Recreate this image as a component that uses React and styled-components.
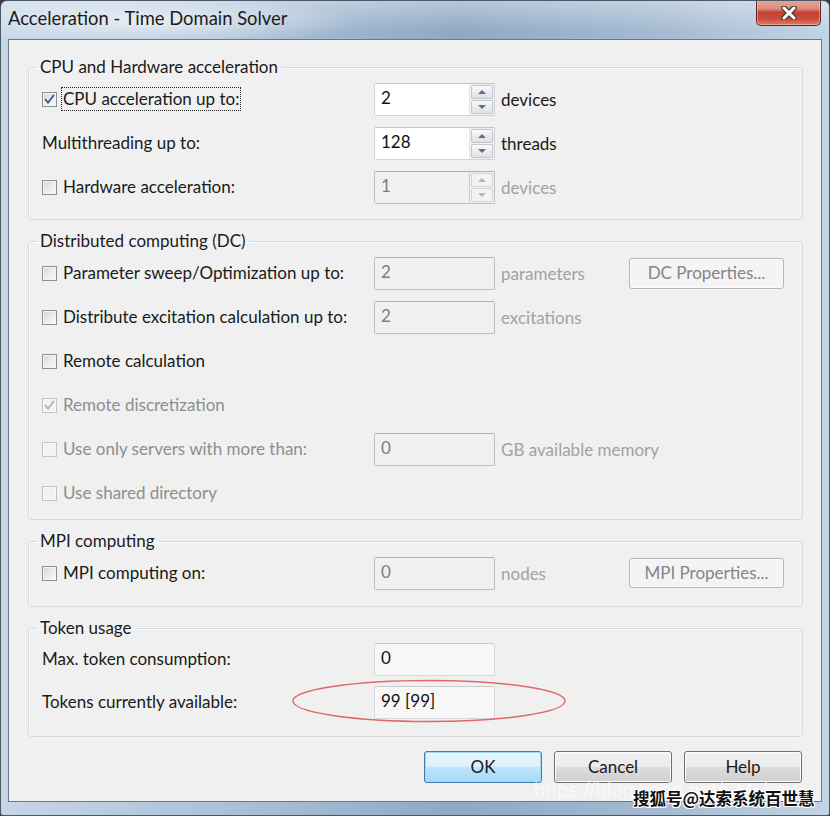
import React from "react";
import styled, { createGlobalStyle } from "styled-components";

const GlobalStyle = createGlobalStyle`
  html, body {
    margin: 0;
    padding: 0;
    background: #3a3f46;
  }
  body {
    font-family: Lato, "Liberation Sans", sans-serif;
  }
`;

const Window = styled.div`
  position: relative;
  width: 830px;
  height: 816px;
  box-sizing: border-box;
  display: flex;
  flex-direction: column;
  border-radius: 7px 7px 3px 3px;
  border: 1px solid #4b5866;
  overflow: hidden;
  background:
    linear-gradient(180deg, rgba(255, 255, 255, 0.35) 0px, rgba(255, 255, 255, 0) 30px),
    linear-gradient(90deg, #c6d6e7 0%, #a9bfd6 30%, #8fa9c4 55%, #a5bbd3 80%, #c2d4e6 100%);
`;

const TitleBar = styled.div`
  height: 38px;
  display: flex;
  align-items: flex-start;
  background: radial-gradient(ellipse 210px 26px at 145px 20px, rgba(236, 242, 248, 0.9), rgba(236, 242, 248, 0));
`;

const Title = styled.div`
  padding: 6px 0 0 7px;
  font-size: 18.4px;
  color: #1c1c1c;
`;

const CloseButton = styled.div`
  margin-left: auto;
  margin-right: 8px;
  margin-top: -1px;
  width: 65px;
  height: 26px;
  box-sizing: border-box;
  border: 1px solid #5e2620;
  border-top: none;
  border-radius: 0 0 5px 5px;
  background: linear-gradient(180deg, #e8a89d 0%, #d98a7d 35%, #c4402f 50%, #c84d3d 75%, #db7d63 100%);
  box-shadow: inset 0 0 0 1px rgba(255, 220, 210, 0.45);
  display: flex;
  align-items: center;
  justify-content: center;
`;

const Client = styled.div`
  flex: 1;
  margin: 0 7px 0 7px;
  border: 1px solid #6a7988;
  background: #f0f0f0;
  padding: 17px 18px 17px 19px;
  display: flex;
  flex-direction: column;
  gap: 11px;
  color: #1a1a1a;
  font-size: 17px;
`;

const BottomFrame = styled.div`
  height: 13px;
`;

const Group = styled.fieldset`
  margin: 0;
  padding: 0 18px ${(p) => p.$pb}px 13px;
  border: 1px solid #d3dbe2;
  border-radius: 3px;
  box-shadow: inset 1px 1px 0 #fbfbfb;
`;

const Legend = styled.legend`
  margin-left: -5px;
  padding: 0 3px;
  font-size: 17px;
  line-height: 20px;
  color: #1a1a1a;
`;

const Row = styled.div`
  position: relative;
  display: flex;
  align-items: center;
  height: ${(p) => p.$h || 44}px;
`;

const LabelCell = styled.div`
  width: 332px;
  display: flex;
  align-items: center;
  gap: 4px;
  color: ${(p) => (p.$disabled ? "#8e8e8e" : "#1a1a1a")};
`;

const LabelText = styled.span`
  padding: ${(p) => (p.$plain ? "0" : "1px")};
  border: ${(p) => (p.$plain ? "none" : "1px dotted")};
  border-color: ${(p) => (p.$focus ? "#222" : "transparent")};
  line-height: 20px;
`;

const Box = styled.span`
  width: 15px;
  height: 15px;
  box-sizing: border-box;
  flex: none;
  border: 1px solid ${(p) => (p.$disabled ? "#c4c4c4" : "#8e8f8f")};
  background: ${(p) =>
    p.$disabled
      ? "#f2f2f2"
      : "linear-gradient(135deg, #d6d6d6 0%, #ececec 55%, #fbfbfb 100%)"};
  box-shadow: inset 0 0 0 1px ${(p) => (p.$disabled ? "#f7f7f7" : "#f4f4f4")};
  display: flex;
  align-items: center;
  justify-content: center;
`;

const Field = styled.div`
  width: 121px;
  height: 33px;
  box-sizing: border-box;
  border: 1px solid ${(p) => (p.$disabled ? "#bcc0c4" : "#d7d9dc")};
  border-top-color: ${(p) => (p.$disabled ? "#adb1b5" : "#c8cacd")};
  border-radius: 2px;
  background: ${(p) => (p.$disabled ? "#f0f0f0" : p.$readonly ? "#f7f7f7" : "#fff")};
  padding: 0 0 3px 6px;
  display: flex;
  align-items: center;
  color: ${(p) => (p.$disabled ? "#7d7d7d" : "#111")};
`;

const SpinField = styled.div`
  width: 121px;
  height: 33px;
  box-sizing: border-box;
  display: flex;
  border: 1px solid ${(p) => (p.$disabled ? "#bcc0c4" : "#d0d3d7")};
  border-top-color: ${(p) => (p.$disabled ? "#adb1b5" : "#bfc2c6")};
  border-radius: 2px;
  background: #f0f0f0;
`;

const SpinText = styled.div`
  flex: 1;
  background: ${(p) => (p.$disabled ? "#f0f0f0" : "#fff")};
  border-right: 1px solid ${(p) => (p.$disabled ? "#d0d0d0" : "#e2e4e7")};
  padding: 0 0 3px 6px;
  display: flex;
  align-items: center;
  color: ${(p) => (p.$disabled ? "#7d7d7d" : "#111")};
`;

const SpinCol = styled.div`
  width: 22px;
  padding: 1px;
  display: flex;
  flex-direction: column;
  gap: 1px;
`;

const SpinButton = styled.div`
  flex: 1;
  border: 1px solid ${(p) => (p.$disabled ? "#d4d4d4" : "#c3c7cc")};
  border-radius: 2px;
  background: ${(p) =>
    p.$disabled ? "#f3f3f3" : "linear-gradient(180deg, #fafafa 0%, #ececec 50%, #e0e0e0 100%)"};
  display: flex;
  align-items: center;
  justify-content: center;

  &::after {
    content: "";
    width: 0;
    height: 0;
    border-left: 4px solid transparent;
    border-right: 4px solid transparent;
    ${(p) => (p.$down ? "border-top" : "border-bottom")}: 4px solid
      ${(p) => (p.$disabled ? "#b6b6b6" : "#5a6f96")};
  }
`;

const Unit = styled.span`
  margin-left: 6px;
  width: ${(p) => (p.$wide ? "auto" : "128px")};
  color: ${(p) => (p.$disabled ? "#a2a2a2" : "#1a1a1a")};
`;

const Button = styled.button`
  width: ${(p) => p.$w || 118}px;
  height: ${(p) => p.$h || 32}px;
  box-sizing: border-box;
  font-family: inherit;
  font-size: 17px;
  border-radius: 3px;
  padding: 0 0 2px;
  cursor: default;
  color: ${(p) => (p.$disabled ? "#858585" : "#1a1a1a")};
  border: 1px solid ${(p) => (p.$disabled ? "#b2b6ba" : p.$default ? "#3c7fb1" : "#707070")};
  background: ${(p) =>
    p.$disabled
      ? "#f4f4f4"
      : p.$default
      ? "linear-gradient(180deg, #eaf6fd 0%, #d9f0fc 50%, #bee6fd 50%, #a7d9f5 100%)"
      : "linear-gradient(180deg, #f2f2f2 0%, #ebebeb 50%, #dddddd 50%, #cfcfcf 100%)"};
  box-shadow: inset 0 0 0 1px ${(p) => (p.$disabled ? "#fbfbfb" : p.$default ? "#9fd9fa" : "#fcfcfc")};
`;

const Footer = styled.div`
  margin-top: 3px;
  display: flex;
  justify-content: flex-end;
  gap: 12px;
  padding-right: 1px;
`;

const Ellipse = styled.svg`
  position: absolute;
  left: 249px;
  top: -1px;
  overflow: visible;
`;

const WatermarkUrl = styled.div`
  position: absolute;
  left: 533px;
  top: 778px;
  font-family: "Liberation Sans", sans-serif;
  font-size: 20px;
  color: rgba(255, 255, 255, 0.6);
  letter-spacing: 0.2px;
  white-space: nowrap;
`;

const WatermarkSohu = styled.div`
  position: absolute;
  left: 632px;
  top: 785px;
  font-family: "Noto Sans CJK SC", sans-serif;
  font-size: 16.5px;
  font-weight: 700;
  color: #111;
  white-space: nowrap;
  text-shadow: 1px 0 #fff, -1px 0 #fff, 0 1px #fff, 0 -1px #fff, 1px 1px #fff, -1px -1px #fff, 1px -1px #fff,
    -1px 1px #fff;
`;

const Check = ({ disabled }) => (
  <svg width="11" height="11" viewBox="0 0 11 11">
    <path
      d="M1.5 5.5 L4 8.8 L9.5 1.5"
      fill="none"
      stroke={disabled ? "#b0b0b0" : "#3c54a4"}
      strokeWidth="1.8"
      strokeLinecap="round"
      strokeLinejoin="round"
    />
  </svg>
);

const CheckBox = ({ checked, disabled }) => (
  <Box $disabled={disabled}>{checked && <Check disabled={disabled} />}</Box>
);

const Spin = ({ value, disabled }) => (
  <SpinField $disabled={disabled}>
    <SpinText $disabled={disabled}>{value}</SpinText>
    <SpinCol>
      <SpinButton $disabled={disabled} />
      <SpinButton $disabled={disabled} $down />
    </SpinCol>
  </SpinField>
);

const Option = ({ label, checked, disabled, focus }) => (
  <LabelCell $disabled={disabled}>
    <CheckBox checked={checked} disabled={disabled} />
    <LabelText $focus={focus}>{label}</LabelText>
  </LabelCell>
);

const Plain = ({ label }) => (
  <LabelCell>
    <LabelText $plain>{label}</LabelText>
  </LabelCell>
);

export default function App() {
  return (
    <>
      <GlobalStyle />
      <Window>
        <TitleBar>
          <Title>Acceleration - Time Domain Solver</Title>
          <CloseButton>
            <svg width="18" height="14" viewBox="0 0 18 14">
              <path d="M4 2 L14 12 M14 2 L4 12" stroke="#4a3a38" strokeWidth="5.5" strokeLinecap="round" />
              <path d="M4 2 L14 12 M14 2 L4 12" stroke="#ffffff" strokeWidth="3" strokeLinecap="round" />
            </svg>
          </CloseButton>
        </TitleBar>

        <Client>
          <Group $pb={10}>
            <Legend>CPU and Hardware acceleration</Legend>
            <Row>
              <Option label="CPU acceleration up to:" checked focus />
              <Spin value="2" />
              <Unit>devices</Unit>
            </Row>
            <Row>
              <Plain label="Multithreading up to:" />
              <Spin value="128" />
              <Unit>threads</Unit>
            </Row>
            <Row>
              <Option label="Hardware acceleration:" />
              <Spin value="1" disabled />
              <Unit $disabled>devices</Unit>
            </Row>
          </Group>

          <Group $pb={4}>
            <Legend>Distributed computing (DC)</Legend>
            <Row>
              <Option label="Parameter sweep/Optimization up to:" />
              <Field $disabled>2</Field>
              <Unit $disabled>parameters</Unit>
              <Button $w={155} $h={31} $disabled>
                DC Properties...
              </Button>
            </Row>
            <Row>
              <Option label="Distribute excitation calculation up to:" />
              <Field $disabled>2</Field>
              <Unit $disabled>excitations</Unit>
            </Row>
            <Row>
              <Option label="Remote calculation" />
            </Row>
            <Row>
              <Option label="Remote discretization" checked disabled />
            </Row>
            <Row>
              <Option label="Use only servers with more than:" disabled />
              <Field $disabled>0</Field>
              <Unit $disabled $wide>
                GB available memory
              </Unit>
            </Row>
            <Row>
              <Option label="Use shared directory" disabled />
            </Row>
          </Group>

          <Group $pb={11}>
            <Legend>MPI computing</Legend>
            <Row>
              <Option label="MPI computing on:" />
              <Field $disabled>0</Field>
              <Unit $disabled>nodes</Unit>
              <Button $w={155} $h={30} $disabled>
                MPI Properties...
              </Button>
            </Row>
          </Group>

          <Group $pb={12}>
            <Legend>Token usage</Legend>
            <Row $h={42}>
              <Plain label="Max. token consumption:" />
              <Field $readonly>0</Field>
            </Row>
            <Row>
              <Plain label="Tokens currently available:" />
              <Field $readonly>99 [99]</Field>
              <Ellipse width="276" height="44" viewBox="0 0 276 44">
                <ellipse cx="138" cy="22" rx="136" ry="20.5" fill="none" stroke="#e2676a" strokeWidth="1.4" />
              </Ellipse>
            </Row>
          </Group>

          <Footer>
            <Button $default>OK</Button>
            <Button>Cancel</Button>
            <Button>Help</Button>
          </Footer>
        </Client>
        <BottomFrame />

        <WatermarkUrl>https://blog.csdn.net/FM_bqy</WatermarkUrl>
        <WatermarkSohu>搜狐号@达索系统百世慧</WatermarkSohu>
      </Window>
    </>
  );
}
